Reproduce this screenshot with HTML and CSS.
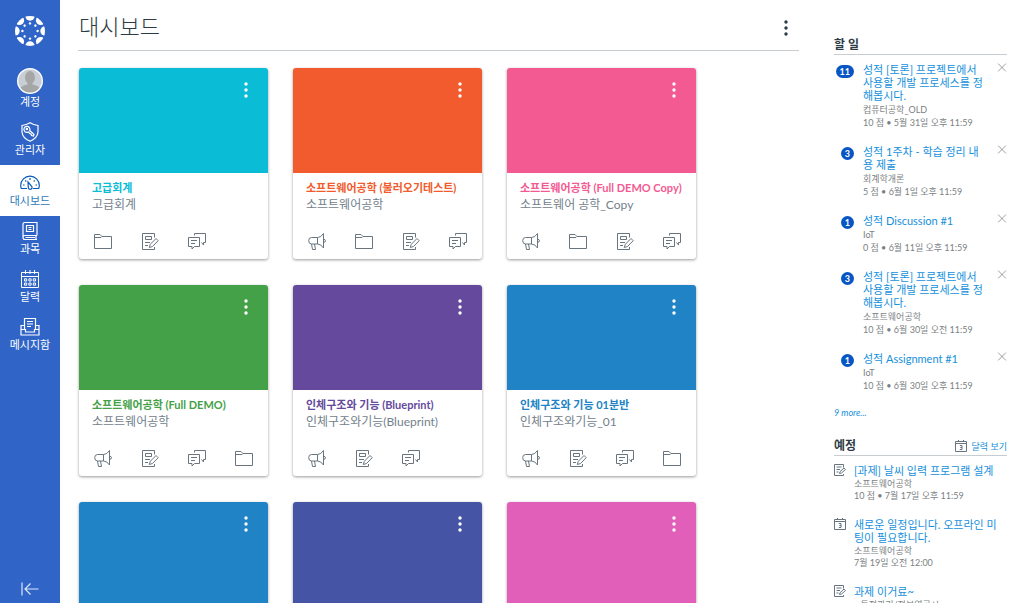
FILE: index.html
```html
<!DOCTYPE html>
<html lang="ko">
<head>
<meta charset="utf-8">
<meta name="viewport" content="width=device-width, initial-scale=1">
<title>대시보드</title>
<link rel="stylesheet" href="styles.css">
</head>
<body>
<svg class="sprite" aria-hidden="true">
  <symbol id="folder" viewBox="0 0 18 18"><path d="M.5 16.500V2.500H6L8 4.500H17.500V16.500ZM.5 5.500H7L8 4.500"/></symbol>
  <symbol id="assignment" viewBox="0 0 18 18"><path d="M13.500 5.500V1.500H1.500V17.500H13.500V15M4.500 4.500H10.500V7.500H4.500ZM4 10.500H9M4 13.500H7M8.300 15.500L9.300 12.300L15 6.500L17.200 8.700L11.500 14.500Z"/></symbol>
  <symbol id="note" viewBox="0 0 12 12"><path d="M9.500 3.500V.5H.5V11.500H9.500V10M2.500 3H7.500M2.500 5.500H6M2.500 8H4.500M5.500 9.500L6 7.700L10 4L11.500 5.500L7.500 9Z"/></symbol>
  <symbol id="discussion" viewBox="0 0 18 18"><path d="M.5 5.500H11.500V14.500H6.500L4 17V14.500H.5ZM3 8.500H9M3 11.500H7M6.500 3.500V1.500H17.500V10.500H15.500V13L13.500 10.500"/></symbol>
  <symbol id="announcement" viewBox="0 0 18 18"><path d="M9.500 5.500H3.500Q.7 5.500 .7 8.700Q.7 12 3.500 12H9.500ZM9.500 5.500Q13 5.500 15.500 1.500V16Q13 12 9.500 12M3.500 12L4.500 17.500H7.500L6.500 12M15.500 7.300Q17.500 7.300 17.500 8.800Q17.500 10.300 15.500 10.300"/></symbol>
  <symbol id="close" viewBox="0 0 10 10"><path d="M.7.7L9.300 9.300M9.300.7L.7 9.300"/></symbol>
  <symbol id="dots" viewBox="0 0 4 16"><circle cx="2" cy="2" r="1.700"/><circle cx="2" cy="8" r="1.700"/><circle cx="2" cy="14" r="1.700"/></symbol>
  <symbol id="date" viewBox="0 0 12 12"><path d="M.5 1.500H11.500V11.500H.5ZM.5 3.500H11.500M3.500 0V2M8.500 0V2M4.800 5.500H7V9.500H4.800M5.300 7.500H7"/></symbol>
</svg>
<div class="app">
  <nav class="nav" aria-label="전역 탐색">
    <a class="logo" href="#" aria-label="홈">
      <svg viewBox="0 0 30 30">
        <clipPath id="ring"><circle cx="15" cy="15" r="15"/></clipPath>
        <g clip-path="url(#ring)">
          <g id="spoke"><circle cx="15" cy="0" r="4.700"/><circle cx="15" cy="7.400" r="1.200"/></g>
          <use href="#spoke" transform="rotate(45 15 15)"/><use href="#spoke" transform="rotate(90 15 15)"/><use href="#spoke" transform="rotate(135 15 15)"/><use href="#spoke" transform="rotate(180 15 15)"/><use href="#spoke" transform="rotate(225 15 15)"/><use href="#spoke" transform="rotate(270 15 15)"/><use href="#spoke" transform="rotate(315 15 15)"/>
        </g>
      </svg>
    </a>
    <a class="nav-item" href="#">
      <svg class="avatar" viewBox="0 0 26 26"><clipPath id="face"><circle cx="13" cy="13" r="12"/></clipPath><circle cx="13" cy="13" r="12" fill="#c8ced6"/><g clip-path="url(#face)" fill="#a6a6a6"><ellipse cx="13" cy="9.500" rx="5" ry="6.500"/><path d="M10.500 13H15.500V16.500Q22 17.500 23 21V26H3V21Q4 17.500 10.500 16.500Z"/></g><circle cx="13" cy="13" r="12.300" fill="none" stroke="#fff" stroke-width="1.400"/></svg>
      <span>계정</span>
    </a>
    <a class="nav-item" href="#">
      <svg class="icon" viewBox="0 0 20 20"><path d="M10 .8Q13.500 3 18 3.500V10Q17.500 16 10 19.300Q2.500 16 2 10V3.500Q6.500 3 10 .8Z"/><path d="M9.700 8.500A3 3 0 1 0 7.500 10.300L8.700 10L9.500 11.500L11 12L11.500 13.500L13.500 14L14 12.500Z"/><circle cx="6.900" cy="7" r=".7"/></svg>
      <span>관리자</span>
    </a>
    <a class="nav-item active" href="#" aria-current="page">
      <svg class="icon" viewBox="0 0 20 20"><path d="M7 15.500H1.300Q.7 14 .7 12.500A9.300 9.300 0 0 1 19.300 12.500Q19.300 14 18.700 15.500H13M10 5V7M3 12H4.500M17 12H15.500M5.300 7.500L6.300 8.500M14.700 7.500L13.700 8.500M8 9L11.700 13.300A1.900 1.900 0 1 1 8.300 14.500Z"/></svg>
      <span>대시보드</span>
    </a>
    <a class="nav-item" href="#">
      <svg class="icon" viewBox="0 0 20 20"><path d="M17 14.500V1.500H5Q3 1.500 3 3.500V16.500Q3 18.500 5 18.500H17M17 14.500H5Q3 14.500 3 16.500M16 14.500V18.500M5.500 16.500H15M6.500 4.500H13.500V10.500H6.500ZM8.500 6.500H11.500M8.500 8.500H11.500"/></svg>
      <span>과목</span>
    </a>
    <a class="nav-item" href="#">
      <svg class="icon thin" viewBox="0 0 20 20"><path d="M1.500 3.500H18.500V18.500H1.500ZM1.500 7.500H18.500M5.500 1V5M10 1V5M14.500 1V5"/><path d="M4.500 9.800H6.700V12H4.500ZM8.900 9.800H11.100V12H8.900ZM13.300 9.800H15.500V12H13.300ZM4.500 14H6.700V16.200H4.500ZM8.900 14H11.100V16.200H8.900ZM13.300 14H15.500V16.200H13.300Z"/></svg>
      <span>달력</span>
    </a>
    <a class="nav-item" href="#">
      <svg class="icon" viewBox="0 0 20 20"><path d="M4.500 12V1.500H15.500V12M4.500 8.500H1V18H19V8.500H15.500M1 12.500H5.500V15H14.500V12.500H19M7 4.500H13M7 7H13M7 9.500H11"/></svg>
      <span>메시지함</span>
    </a>
    <button class="collapse" type="button" aria-label="탐색 최소화"><svg viewBox="0 0 18 14"><path d="M1 .5V13.500M17.500 7H4M9.500 1.500L4 7L9.500 12.500"/></svg></button>
  </nav>

  <main class="main">
    <header class="page-head">
      <h1>대시보드</h1>
      <button class="kebab" type="button" aria-label="대시보드 옵션"><svg><use href="#dots"/></svg></button>
    </header>
    <div class="cards">
      <article class="card cyan">
        <div class="hero"><button class="kebab" type="button" aria-label="고급회계 옵션"><svg><use href="#dots"/></svg></button></div>
        <div class="info"><h2><a href="#">고급회계</a></h2><p>고급회계</p></div>
        <div class="actions"><a href="#" aria-label="파일"><svg><use href="#folder"/></svg></a><a href="#" aria-label="과제"><svg><use href="#assignment"/></svg></a><a href="#" aria-label="토론"><svg><use href="#discussion"/></svg></a></div>
      </article>
      <article class="card orange">
        <div class="hero"><button class="kebab" type="button" aria-label="과목 옵션"><svg><use href="#dots"/></svg></button></div>
        <div class="info"><h2><a href="#">소프트웨어공학 (불러오기테스트)</a></h2><p>소프트웨어공학</p></div>
        <div class="actions"><a href="#" aria-label="공지"><svg><use href="#announcement"/></svg></a><a href="#" aria-label="파일"><svg><use href="#folder"/></svg></a><a href="#" aria-label="과제"><svg><use href="#assignment"/></svg></a><a href="#" aria-label="토론"><svg><use href="#discussion"/></svg></a></div>
      </article>
      <article class="card pink">
        <div class="hero"><button class="kebab" type="button" aria-label="과목 옵션"><svg><use href="#dots"/></svg></button></div>
        <div class="info"><h2><a href="#">소프트웨어공학 (Full DEMO Copy)</a></h2><p>소프트웨어 공학_Copy</p></div>
        <div class="actions"><a href="#" aria-label="공지"><svg><use href="#announcement"/></svg></a><a href="#" aria-label="파일"><svg><use href="#folder"/></svg></a><a href="#" aria-label="과제"><svg><use href="#assignment"/></svg></a><a href="#" aria-label="토론"><svg><use href="#discussion"/></svg></a></div>
      </article>
      <article class="card green">
        <div class="hero"><button class="kebab" type="button" aria-label="과목 옵션"><svg><use href="#dots"/></svg></button></div>
        <div class="info"><h2><a href="#">소프트웨어공학 (Full DEMO)</a></h2><p>소프트웨어공학</p></div>
        <div class="actions"><a href="#" aria-label="공지"><svg><use href="#announcement"/></svg></a><a href="#" aria-label="과제"><svg><use href="#assignment"/></svg></a><a href="#" aria-label="토론"><svg><use href="#discussion"/></svg></a><a href="#" aria-label="파일"><svg><use href="#folder"/></svg></a></div>
      </article>
      <article class="card purple">
        <div class="hero"><button class="kebab" type="button" aria-label="과목 옵션"><svg><use href="#dots"/></svg></button></div>
        <div class="info"><h2><a href="#">인체구조와 기능 (Blueprint)</a></h2><p>인체구조와기능(Blueprint)</p></div>
        <div class="actions"><a href="#" aria-label="공지"><svg><use href="#announcement"/></svg></a><a href="#" aria-label="과제"><svg><use href="#assignment"/></svg></a><a href="#" aria-label="토론"><svg><use href="#discussion"/></svg></a></div>
      </article>
      <article class="card blue">
        <div class="hero"><button class="kebab" type="button" aria-label="과목 옵션"><svg><use href="#dots"/></svg></button></div>
        <div class="info"><h2><a href="#">인체구조와 기능 01분반</a></h2><p>인체구조와기능_01</p></div>
        <div class="actions"><a href="#" aria-label="공지"><svg><use href="#announcement"/></svg></a><a href="#" aria-label="과제"><svg><use href="#assignment"/></svg></a><a href="#" aria-label="토론"><svg><use href="#discussion"/></svg></a><a href="#" aria-label="파일"><svg><use href="#folder"/></svg></a></div>
      </article>
      <article class="card blue"><div class="hero"><button class="kebab" type="button" aria-label="과목 옵션"><svg><use href="#dots"/></svg></button></div></article>
      <article class="card indigo"><div class="hero"><button class="kebab" type="button" aria-label="과목 옵션"><svg><use href="#dots"/></svg></button></div></article>
      <article class="card magenta"><div class="hero"><button class="kebab" type="button" aria-label="과목 옵션"><svg><use href="#dots"/></svg></button></div></article>
    </div>
  </main>

  <aside class="side">
    <section>
      <div class="side-head"><h2>할 일</h2></div>
      <ul class="todo">
        <li><span class="mark"><b class="badge">11</b></span><div class="text"><a href="#">성적 [토론] 프로젝트에서 사용할 개발 프로세스를 정해봅시다.</a><p>컴퓨터공학_OLD</p><p>10 점 • 5월 31일 오후 11:59</p></div><button class="close" type="button" aria-label="무시"><svg><use href="#close"/></svg></button></li>
        <li><span class="mark"><b class="badge">3</b></span><div class="text"><a href="#">성적 1주차 - 학습 정리 내용 제출</a><p>회계학개론</p><p>5 점 • 6월 1일 오후 11:59</p></div><button class="close" type="button" aria-label="무시"><svg><use href="#close"/></svg></button></li>
        <li><span class="mark"><b class="badge">1</b></span><div class="text"><a href="#">성적 Discussion #1</a><p>IoT</p><p>0 점 • 6월 11일 오후 11:59</p></div><button class="close" type="button" aria-label="무시"><svg><use href="#close"/></svg></button></li>
        <li><span class="mark"><b class="badge">3</b></span><div class="text"><a href="#">성적 [토론] 프로젝트에서 사용할 개발 프로세스를 정해봅시다.</a><p>소프트웨어공학</p><p>10 점 • 6월 30일 오전 11:59</p></div><button class="close" type="button" aria-label="무시"><svg><use href="#close"/></svg></button></li>
        <li><span class="mark"><b class="badge">1</b></span><div class="text"><a href="#">성적 Assignment #1</a><p>IoT</p><p>10 점 • 6월 30일 오후 11:59</p></div><button class="close" type="button" aria-label="무시"><svg><use href="#close"/></svg></button></li>
      </ul>
      <a class="more" href="#">9 more...</a>
    </section>
    <section class="upcoming">
      <div class="side-head"><h2>예정</h2><a href="#"><svg><use href="#date"/></svg>달력 보기</a></div>
      <ul class="events">
        <li><svg><use href="#note"/></svg><div class="text"><a href="#">[과제] 날씨 입력 프로그램 설계</a><p>소프트웨어공학</p><p>10 점 • 7월 17일 오후 11:59</p></div></li>
        <li><svg><use href="#date"/></svg><div class="text"><a href="#">새로운 일정입니다. 오프라인 미팅이 필요합니다.</a><p>소프트웨어공학</p><p>7월 19일 오전 12:00</p></div></li>
        <li><svg><use href="#note"/></svg><div class="text"><a href="#">과제 이거료~</a><p>_ 특정관리/정보역공시</p></div></li>
      </ul>
    </section>
  </aside>
</div>
</body>
</html>
```
FILE: styles.css
```css
* { box-sizing: border-box; }
body { margin: 0; background: #fff; color: #2d3b45; font: 11px/13px Lato, "Noto Sans CJK KR", sans-serif; }
h1, h2, p, ul { margin: 0; padding: 0; }
ul { list-style: none; }
a { color: #1690db; text-decoration: none; }
button { padding: 0; border: 0; background: none; color: inherit; font: inherit; cursor: pointer; }
svg { display: block; flex: none; fill: none; stroke: currentColor; }
.sprite { position: absolute; width: 0; height: 0; }

.app { display: flex; height: 100vh; overflow: hidden; }

.nav { display: flex; flex-direction: column; flex: none; width: 60px; background: #3064c6; color: #fff; }
.logo { display: flex; justify-content: center; padding: 16px 0 17px; color: #fff; }
.logo svg { width: 30px; height: 30px; fill: currentColor; stroke: none; }
.nav-item { display: flex; flex-direction: column; align-items: center; gap: 1px; padding: 5px 0 8px; color: #fff; line-height: 14px; }
.nav-item.active { padding-top: 8px; background: #fff; color: #2b7abc; }
.nav-item.active .icon { color: #0a5bb8; }
.nav-item .icon { width: 20px; height: 20px; stroke-width: 1.2; }
.nav-item .thin { stroke-width: 1; }
.nav-item .avatar { width: 26px; height: 26px; stroke: none; }
.collapse { display: flex; justify-content: center; margin-top: auto; padding-bottom: 7px; color: #dbe7fa; }
.collapse svg { width: 18px; height: 14px; stroke-width: 1.2; }

.main { flex: 1; min-width: 0; padding-left: 18px; overflow: hidden; }
.page-head { display: flex; align-items: center; justify-content: space-between; height: 51px; padding: 4px 3px 0 1px; border-bottom: 1px solid #c7cdd1; }
h1 { font-size: 22px; line-height: 30px; font-weight: 300; }
.kebab { display: flex; align-items: center; justify-content: center; width: 20px; height: 20px; }
.kebab svg { width: 4px; height: 16px; fill: currentColor; stroke: none; }
.page-head .kebab { margin-top: 2px; }

.cards { display: grid; grid-template-columns: repeat(auto-fill, 189px); gap: 26px 25px; padding: 17px 1px; }
.card { display: flex; flex-direction: column; min-height: 191px; border-radius: 3px; background: #fff; box-shadow: 0 1px 3px rgba(0, 0, 0, .4); overflow: hidden; }
.hero { display: flex; justify-content: flex-end; align-items: flex-start; height: 105px; padding: 12px; background: var(--course); color: #fff; }
.info { padding: 8px 13px 18px; }
.info h2 { margin-bottom: 1px; font-size: 11px; line-height: 14px; font-weight: 700; white-space: nowrap; }
.info h2 a { color: var(--course); }
.info p { color: #73818c; font-size: 12px; line-height: 18px; }
.actions { display: grid; grid-template-columns: repeat(4, 1fr); justify-items: center; padding-bottom: 9px; }
.actions a { color: #68757f; }
.actions svg { width: 18px; height: 18px; }
.cyan { --course: #0bbcd6; }
.orange { --course: #f15b2d; }
.pink { --course: #f45a92; }
.green { --course: #44a147; }
.purple { --course: #65499d; }
.blue { --course: #2083c5; }
.indigo { --course: #4554a4; }
.magenta { --course: #e15fb9; }

.side { flex: none; width: 225px; padding: 36px 17px 0 35px; overflow: hidden; }
.side-head { display: flex; align-items: center; justify-content: space-between; height: 19px; border-bottom: 1px solid #c7cdd1; }
.side-head h2 { font-size: 12px; line-height: 16px; font-weight: 700; }
.side-head a { display: flex; align-items: center; gap: 5px; font-size: 9px; }
.side-head svg { width: 12px; height: 12px; color: #68757f; }
.todo { padding-top: 8px; }
.todo li { display: flex; margin-bottom: 16px; }
.mark { display: flex; flex: none; justify-content: flex-end; align-items: flex-start; width: 20px; margin-right: 9px; padding-top: 2px; }
.badge { min-width: 13px; padding: 0 4px; border-radius: 7px; background: #0855c6; color: #fff; font-size: 9px; line-height: 13px; text-align: center; }
.text { flex: 1; min-width: 0; }
.text a { display: block; margin-bottom: 1px; }
.text p { color: #7b7f83; font-size: 9px; }
.close { flex: none; align-self: flex-start; width: 10px; margin-left: 13px; color: #75797d; }
.close svg { width: 10px; height: 9px; stroke-width: .8; }
.more { display: block; margin-top: -2px; font-size: 9px; font-style: italic; }
.upcoming { padding-top: 18px; }
.events { padding-top: 8px; }
.events li { display: flex; gap: 8px; margin-bottom: 16px; padding-right: 6px; }
.events li > svg { width: 12px; height: 12px; color: #68757f; }
.events .text p { line-height: 12px; }
```
